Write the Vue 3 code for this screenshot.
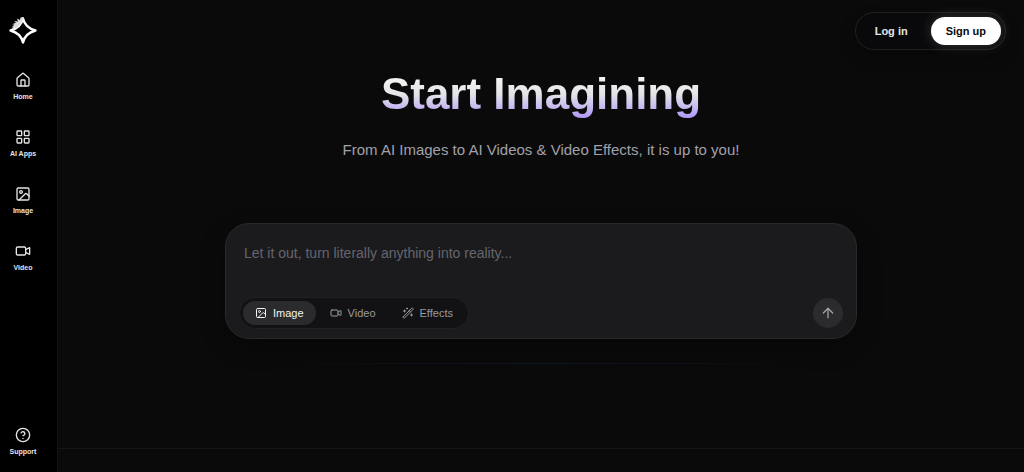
<script setup>
import { ref } from 'vue'

const prompt = ref('')
const mode = ref('Image')

const icons = {
  home: ['M15 21v-8a1 1 0 0 0-1-1h-4a1 1 0 0 0-1 1v8', 'M3 10a2 2 0 0 1 .7-1.5l7-6a2 2 0 0 1 2.6 0l7 6A2 2 0 0 1 21 10v9a2 2 0 0 1-2 2H5a2 2 0 0 1-2-2z'],
  apps: ['M4 3h5a1 1 0 0 1 1 1v5a1 1 0 0 1-1 1H4a1 1 0 0 1-1-1V4a1 1 0 0 1 1-1z', 'M15 3h5a1 1 0 0 1 1 1v5a1 1 0 0 1-1 1h-5a1 1 0 0 1-1-1V4a1 1 0 0 1 1-1z', 'M15 14h5a1 1 0 0 1 1 1v5a1 1 0 0 1-1 1h-5a1 1 0 0 1-1-1v-5a1 1 0 0 1 1-1z', 'M4 14h5a1 1 0 0 1 1 1v5a1 1 0 0 1-1 1H4a1 1 0 0 1-1-1v-5a1 1 0 0 1 1-1z'],
  image: ['M5 3h14a2 2 0 0 1 2 2v14a2 2 0 0 1-2 2H5a2 2 0 0 1-2-2V5a2 2 0 0 1 2-2z', 'M11 9a2 2 0 1 1-4 0 2 2 0 0 1 4 0z', 'm21 15-3.1-3.1a2 2 0 0 0-2.8 0L6 21'],
  video: ['M4 6h10a2 2 0 0 1 2 2v8a2 2 0 0 1-2 2H4a2 2 0 0 1-2-2V8a2 2 0 0 1 2-2z', 'm16 10 5.2-2.9a.5.5 0 0 1 .8.4v9a.5.5 0 0 1-.8.4L16 14'],
  effects: ['m2.4 19.4 17-17a1.2 1.2 0 0 1 1.7 0l.9.9a1.2 1.2 0 0 1 0 1.7l-17 17a1.2 1.2 0 0 1-1.7 0l-.9-.9a1.2 1.2 0 0 1 0-1.7z', 'm14 7 3 3', 'M5 6v4M3 8h4', 'M19 14v4M17 16h4', 'M10 2v2M9 3h2'],
  support: ['M22 12a10 10 0 1 1-20 0 10 10 0 0 1 20 0z', 'M9.1 9a3 3 0 0 1 5.8 1c0 2-2.9 3-2.9 3', 'M12 17v.1'],
  up: ['m5 12 7-7 7 7', 'M12 19V5'],
}

const links = [
  { label: 'Home', icon: 'home' },
  { label: 'AI Apps', icon: 'apps' },
  { label: 'Image', icon: 'image' },
  { label: 'Video', icon: 'video' },
]
const modes = [
  { label: 'Image', icon: 'image' },
  { label: 'Video', icon: 'video' },
  { label: 'Effects', icon: 'effects' },
]
</script>

<template>
  <div class="page">
    <nav class="sidebar" aria-label="Main">
      <a class="logo" href="#" aria-label="Homepage">
        <svg viewBox="0 0 30 30">
          <path class="star" d="M15 3.500C16.500 10 20 13.500 27.500 15.500C20 17.500 16.500 21 15 27.500C13.500 21 10 17.500 2.500 15.500C10 13.500 13.500 10 15 3.500Z" />
          <path class="feather" d="M3 14.500L5.500 12L3.500 12.500L6.500 9.500L4 9.500L8 7.500L6 6L10 6.500L9 3.500L12 5L12.500 2.500L15.500 2L13.500 8L9 12.500Z" />
        </svg>
      </a>
      <a v-for="link in links" :key="link.label" class="nav-link" href="#">
        <svg class="icon" viewBox="0 0 24 24"><path v-for="d in icons[link.icon]" :key="d" :d="d" /></svg>
        <span>{{ link.label }}</span>
      </a>
      <a class="nav-link support" href="#">
        <svg class="icon" viewBox="0 0 24 24"><path v-for="d in icons.support" :key="d" :d="d" /></svg>
        <span>Support</span>
      </a>
    </nav>

    <div class="content">
      <header class="topbar">
        <div class="account">
          <button class="login" type="button">Log in</button>
          <button class="signup" type="button">Sign up</button>
        </div>
      </header>

      <main class="hero">
        <h1>Start Imagining</h1>
        <p>From AI Images to AI Videos &amp; Video Effects, it is up to you!</p>
        <form class="composer" @submit.prevent>
          <textarea v-model="prompt" rows="2" aria-label="Prompt" placeholder="Let it out, turn literally anything into reality..."></textarea>
          <div class="tools">
            <div class="modes">
              <button v-for="m in modes" :key="m.label" type="button" class="mode" :class="{ active: mode === m.label }" :aria-pressed="mode === m.label" @click="mode = m.label">
                <svg class="icon" viewBox="0 0 24 24"><path v-for="d in icons[m.icon]" :key="d" :d="d" /></svg>
                {{ m.label }}
              </button>
            </div>
            <button class="send" type="submit" aria-label="Generate">
              <svg class="icon" viewBox="0 0 24 24"><path v-for="d in icons.up" :key="d" :d="d" /></svg>
            </button>
          </div>
        </form>
        <div class="glow"></div>
      </main>
      <footer class="bottom"></footer>
    </div>
  </div>
</template>

<style>
body {
  background: #0a0a0a;
}
</style>

<style scoped>
.page {
  display: flex;
  min-height: 100vh;
  background: #0a0a0a;
  color: #e4e4e7;
  font-family: "Liberation Sans", Arial, sans-serif;
}
.page * {
  box-sizing: border-box;
}
button {
  border: 0;
  background: none;
  font-family: inherit;
  cursor: pointer;
}
.icon {
  display: block;
  fill: none;
  stroke: currentColor;
  stroke-width: 2;
  stroke-linecap: round;
  stroke-linejoin: round;
}
.sidebar {
  display: flex;
  flex: none;
  flex-direction: column;
  align-items: flex-start;
  gap: 27px;
  width: 58px;
  padding: 15px 0;
  border-right: 1px solid #131313;
  background: #000;
}
.logo {
  display: block;
  width: 46px;
  height: 30px;
}
.logo svg {
  display: block;
  width: 30px;
  height: 30px;
  margin-left: 8px;
}
.star {
  fill: none;
  stroke: #fff;
  stroke-width: 2.4;
  stroke-linejoin: round;
}
.feather {
  fill: #ddd;
}
.nav-link {
  display: flex;
  flex-direction: column;
  align-items: center;
  gap: 4px;
  width: 46px;
  color: #e4e4e7;
  font-size: 7px;
  font-weight: 700;
  line-height: 10px;
  text-decoration: none;
}
.nav-link .icon {
  width: 16px;
  height: 16px;
}
.support {
  margin-top: auto;
}
.content {
  display: flex;
  flex: 1;
  flex-direction: column;
  min-width: 0;
}
.topbar {
  display: flex;
  justify-content: flex-end;
  padding: 12px 18px 0;
}
.account {
  display: flex;
  align-items: center;
  gap: 8px;
  padding: 4px;
  border: 1px solid #202023;
  border-radius: 20px;
  background: #09090b;
  box-shadow: 0 8px 16px rgba(0, 0, 0, 0.3);
}
.login,
.signup {
  height: 28px;
  padding: 0 15px;
  border-radius: 14px;
  color: #e4e4e7;
  font-size: 11px;
  font-weight: 700;
}
.signup {
  background: #fff;
  color: #09090b;
  box-shadow: 0 0 14px rgba(255, 255, 255, 0.18);
}
.hero {
  display: flex;
  flex: 1;
  flex-direction: column;
  align-items: center;
  padding: 16px 24px 0;
}
h1 {
  margin: 0;
  background: linear-gradient(to bottom, #fff 0%, #e4e4e7 50%, #a78bfa 100%);
  background-clip: text;
  color: transparent;
  font-size: 44px;
  font-weight: 700;
  line-height: 56px;
}
p {
  margin: 16px 0 0;
  color: #a1a1aa;
  font-size: 15px;
  line-height: 24px;
}
.composer {
  width: 100%;
  max-width: 632px;
  margin-top: 61px;
  padding: 16px 13px 9px;
  border: 1px solid #29292b;
  border-radius: 24px;
  background: #1b1b1d;
  box-shadow: 0 8px 24px rgba(0, 0, 0, 0.3);
}
textarea {
  display: block;
  width: 100%;
  height: 57px;
  padding: 2px 5px;
  border: 0;
  outline: none;
  resize: none;
  background: none;
  color: #e4e4e7;
  font-family: inherit;
  font-size: 14px;
  line-height: 22px;
}
textarea::placeholder {
  color: #65656d;
  opacity: 1;
}
.tools {
  display: flex;
  align-items: center;
  justify-content: space-between;
}
.modes {
  display: flex;
  gap: 2px;
  padding: 3px;
  border: 1px solid #202022;
  border-radius: 16px;
  background: #121214;
}
.mode {
  display: flex;
  align-items: center;
  gap: 6px;
  height: 24px;
  padding: 0 12px;
  border-radius: 12px;
  color: #9a9aa2;
  font-size: 11px;
}
.mode .icon {
  width: 12px;
  height: 12px;
}
.mode.active {
  background: #2b2b2d;
  color: #f4f4f5;
}
.send {
  display: grid;
  place-items: center;
  width: 30px;
  height: 30px;
  padding: 0;
  border-radius: 50%;
  background: #2b2b2d;
  color: #a1a1aa;
}
.send .icon {
  width: 16px;
  height: 16px;
}
.glow {
  width: 100%;
  max-width: 580px;
  height: 1px;
  margin-top: 24px;
  background: linear-gradient(to right, transparent, #0e1626, transparent);
}
.bottom {
  height: 24px;
  border-top: 1px solid #161616;
}
</style>
